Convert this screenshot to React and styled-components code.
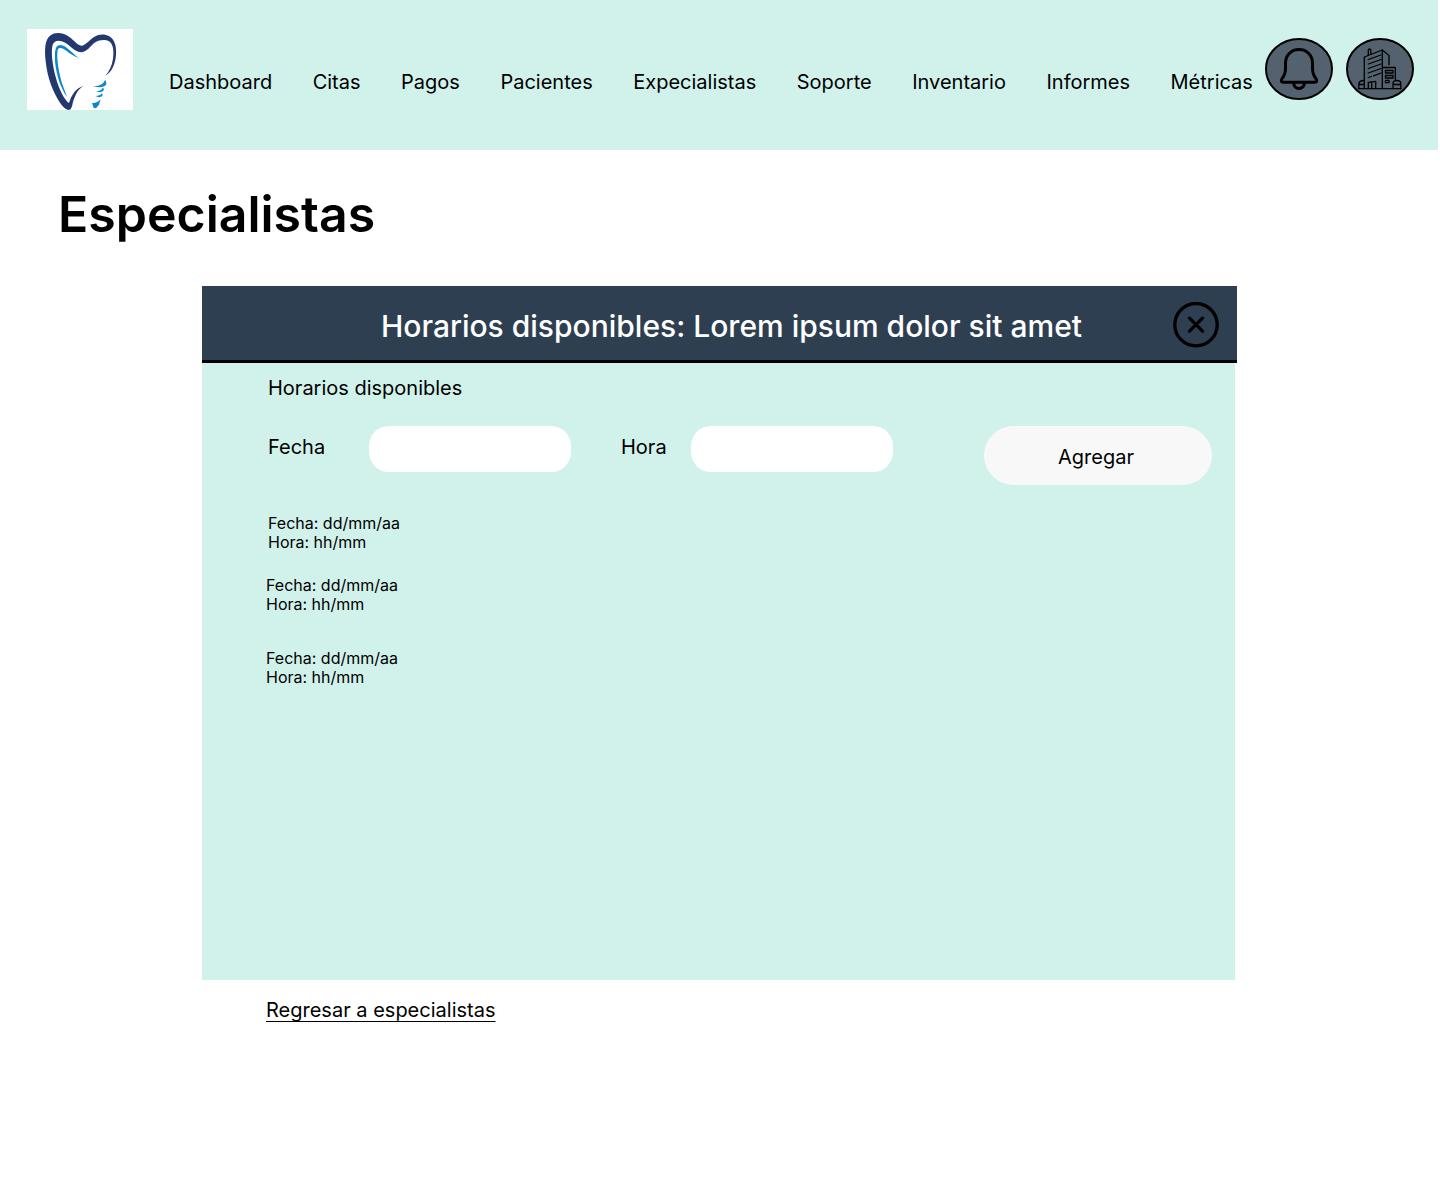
import React from 'react';
import styled, { createGlobalStyle } from 'styled-components';

const mint = '#d1f2eb';
const navy = '#2e3f51';
const slate = '#546270';

const GlobalStyle = createGlobalStyle`
  *, *::before, *::after { box-sizing: border-box; }
  body {
    margin: 0;
    background: #fff;
    color: #000;
    font-family: Inter, "Liberation Sans", sans-serif;
    font-size: 20px;
    line-height: 24px;
  }
  button, input { font: inherit; color: inherit; }
`;

const Page = styled.div`
  padding-right: 2px;
`;

const TopBar = styled.header`
  display: flex;
  align-items: flex-start;
  min-height: 150px;
  padding: 29px 24px 0 27px;
  background: ${mint};
`;

const LogoLink = styled.a`
  flex: none;
  width: 106px;
  height: 81px;
  background: #fff;
  svg { display: block; }
`;

const Nav = styled.nav`
  display: flex;
  flex: 1;
  justify-content: space-between;
  padding: 41px 12px 0 36px;
`;

const NavLink = styled.a`
  color: inherit;
  text-decoration: none;
  white-space: nowrap;
`;

const Actions = styled.div`
  display: flex;
  flex: none;
  gap: 13px;
  padding-top: 9px;
`;

const IconButton = styled.button`
  width: ${(p) => p.$width}px;
  height: ${(p) => p.$height}px;
  flex: none;
  padding: 0;
  border: 0;
  background: none;
  cursor: pointer;
  svg { display: block; }
`;

const PageTitle = styled.h1`
  margin: 34px 0 42px;
  padding-left: 58px;
  font-size: 50px;
  line-height: 60px;
  font-weight: 600;
`;

const Content = styled.main`
  margin: 0 201px 0 202px;
`;

const PanelHeader = styled.div`
  display: flex;
  align-items: flex-start;
  padding: 16px 18px 12px 88px;
  border-bottom: 3px solid #000;
  background: ${navy};
`;

const PanelTitle = styled.h2`
  flex: 1;
  margin: 0;
  padding-top: 6px;
  color: #fff;
  font-size: 30px;
  line-height: 36px;
  font-weight: 500;
  text-align: center;
`;

const PanelBody = styled.section`
  min-height: 617px;
  margin-right: 2px;
  padding: 13px 23px 24px 64px;
  background: ${mint};
`;

const SectionTitle = styled.h3`
  margin: 0;
  padding-left: 2px;
  font-size: 20px;
  font-weight: 400;
`;

const Form = styled.form`
  display: flex;
  align-items: flex-start;
  gap: 50px;
  padding: 26px 0 29px 2px;
`;

const Field = styled.div`
  display: flex;
  align-items: flex-start;
`;

const Label = styled.label`
  width: ${(p) => p.$width}px;
  padding-top: 9px;
`;

const Input = styled.input`
  width: 202px;
  height: 46px;
  padding: 0 16px;
  border: 0;
  border-radius: 20px;
  background: #fff;
`;

const AddButton = styled.button`
  width: 228px;
  height: 59px;
  margin-left: auto;
  padding: 3px 4px 0 0;
  border: 0;
  border-radius: 30px;
  background: #f8f8f8;
  cursor: pointer;
`;

const Schedule = styled.ul`
  margin: 0;
  padding: 0;
  list-style: none;
`;

const Slot = styled.li`
  padding-left: ${(p) => p.$indent}px;
  margin-bottom: ${(p) => p.$gap}px;
  font-size: 16px;
  line-height: 19px;
`;

const BackLink = styled.a`
  display: inline-block;
  margin: 18px 0 0 64px;
  color: inherit;
  text-decoration-thickness: 1px;
  text-decoration-skip-ink: none;
  text-underline-offset: 4px;
`;

function Logo() {
  return (
    <svg width="106" height="81" viewBox="21 27 318 243" aria-hidden="true">
      <path
        fill="#22386f"
        d="M191 198C173 207 164 228 158 250C156 262 153 270 146 270C137 269 128 260 120 248C99 216 82 174 77 124C73 86 75 60 90 47C108 34 131 39 148 51C162 61 173 76 184 77C196 77 207 61 222 51C242 38 270 42 281 62C290 79 290 102 285 124C280 145 270 160 256 167C268 154 276 137 279 116C282 94 280 76 270 66C259 57 239 59 226 67C211 77 202 96 184 97C166 97 153 80 138 70C123 60 104 58 98 74C92 96 98 137 107 171C117 209 134 241 147 249C155 224 168 204 191 198Z"
      />
      <path
        fill="#0d86cb"
        d="M176 114C160 108 151 101 139 92C128 84 116 79 113 90C109 118 117 159 126 190L141 231C126 210 114 179 109 151C104 124 103 97 108 84C113 72 127 73 140 83C153 92 162 104 176 114Z"
      />
      <g fill="#0d86cb">
        <path d="M217 199C232 199 248 196 253 184L256 179L259 189C260 198 247 202 237 202Z" />
        <path d="M228 214C238 213 244 211 248 203L252 207C252 216 239 219 228 214Z" />
        <path d="M227 228C236 227 242 226 246 220L248 224C247 232 235 234 227 228Z" />
        <path d="M216 249C226 250 236 245 242 238L237 254L228 265L221 263Z" />
      </g>
    </svg>
  );
}

function Disc({ children }) {
  return (
    <svg width="68" height="62" viewBox="0 0 68 62" fill="none" stroke="#000" aria-hidden="true">
      <ellipse cx="34" cy="31" rx="33" ry="30" fill={slate} strokeWidth="2" />
      {children}
    </svg>
  );
}

function BellIcon() {
  return (
    <Disc>
      <g strokeWidth="3" strokeLinejoin="round">
        <path d="M34 11.5C26 11.5 20.5 17.5 20.5 25V30C20.5 35 19.5 37.5 17.5 40C15.5 42.5 16 44.3 18.5 44.3H49.5C52 44.3 52.5 42.5 50.5 40C48.5 37.5 47.5 35 47.5 30V25C47.5 17.5 42 11.5 34 11.5Z" />
        <path d="M28.5 45C29 48.5 31 50.5 34 50.5S39 48.5 39.5 45" />
      </g>
    </Disc>
  );
}

function BuildingIcon() {
  return (
    <Disc>
      <g strokeWidth="1.3" strokeLinejoin="round" strokeLinecap="round">
        <path d="M12.5 50.7H55" />
        <path d="M18.3 50.5V19L36.3 12V50.5" />
        <path d="M22.3 17V12Q22.3 11 23.5 11T24.8 12V16" />
        <path d="M36.3 12L43 17.5V26.7" />
        <path d="M22.3 21.5L35 17M22.3 26L35 21.5M22.3 30.5L35 26M22.3 35L35 30.5M22.3 39.5L25.5 38.5M27.5 37.8L35 35" />
        <path d="M36.6 29.5H49.3V42" />
        <path d="M39.5 32.5H47V35H39.5ZM39.5 37.5H47V40H39.5ZM39.5 42.3H43V44.7H39.5Z" />
        <path d="M18 42.5C14.5 42.5 12.8 44 12.8 46.5V50.5M12.8 46.5H18" />
        <path d="M47 50.5V45.5C47 43.5 48.5 42.5 51 42.5S54.8 43.5 54.8 45.5V50.5M47 46.5H54.8" />
        <path d="M22.3 50.5V44.5L29.7 43.3V50.5M25.7 50.5V44" />
      </g>
    </Disc>
  );
}

function CloseIcon() {
  return (
    <svg width="46" height="46" viewBox="0 0 46 46" fill="none" stroke="#000" strokeWidth="3.3" aria-hidden="true">
      <circle cx="23" cy="22.7" r="21.2" />
      <path d="M16.5 16.2L29.5 29.2M29.5 16.2L16.5 29.2" strokeLinecap="round" />
    </svg>
  );
}

const sections = [
  'Dashboard', 'Citas', 'Pagos', 'Pacientes', 'Expecialistas',
  'Soporte', 'Inventario', 'Informes', 'Métricas',
];

const slots = [
  { id: 1, date: 'dd/mm/aa', time: 'hh/mm', indent: 2, gap: 24 },
  { id: 2, date: 'dd/mm/aa', time: 'hh/mm', indent: 0, gap: 35 },
  { id: 3, date: 'dd/mm/aa', time: 'hh/mm', indent: 0, gap: 0 },
];

export default function App() {
  return (
    <Page>
      <GlobalStyle />
      <TopBar>
        <LogoLink href="#inicio" aria-label="Inicio"><Logo /></LogoLink>
        <Nav>
          {sections.map((name) => (
            <NavLink key={name} href={`#${name.toLowerCase()}`}>{name}</NavLink>
          ))}
        </Nav>
        <Actions>
          <IconButton type="button" $width={68} $height={62} aria-label="Notificaciones"><BellIcon /></IconButton>
          <IconButton type="button" $width={68} $height={62} aria-label="Clínica"><BuildingIcon /></IconButton>
        </Actions>
      </TopBar>
      <PageTitle>Especialistas</PageTitle>
      <Content>
        <PanelHeader>
          <PanelTitle>Horarios disponibles: Lorem ipsum dolor sit amet</PanelTitle>
          <IconButton type="button" $width={46} $height={46} aria-label="Cerrar"><CloseIcon /></IconButton>
        </PanelHeader>
        <PanelBody>
          <SectionTitle>Horarios disponibles</SectionTitle>
          <Form onSubmit={(e) => e.preventDefault()}>
            <Field>
              <Label htmlFor="fecha" $width={101}>Fecha</Label>
              <Input id="fecha" type="text" />
            </Field>
            <Field>
              <Label htmlFor="hora" $width={70}>Hora</Label>
              <Input id="hora" type="text" />
            </Field>
            <AddButton type="submit">Agregar</AddButton>
          </Form>
          <Schedule>
            {slots.map((slot) => (
              <Slot key={slot.id} $indent={slot.indent} $gap={slot.gap}>
                <div>Fecha: {slot.date}</div>
                <div>Hora: {slot.time}</div>
              </Slot>
            ))}
          </Schedule>
        </PanelBody>
        <BackLink href="#especialistas">Regresar a especialistas</BackLink>
      </Content>
    </Page>
  );
}
